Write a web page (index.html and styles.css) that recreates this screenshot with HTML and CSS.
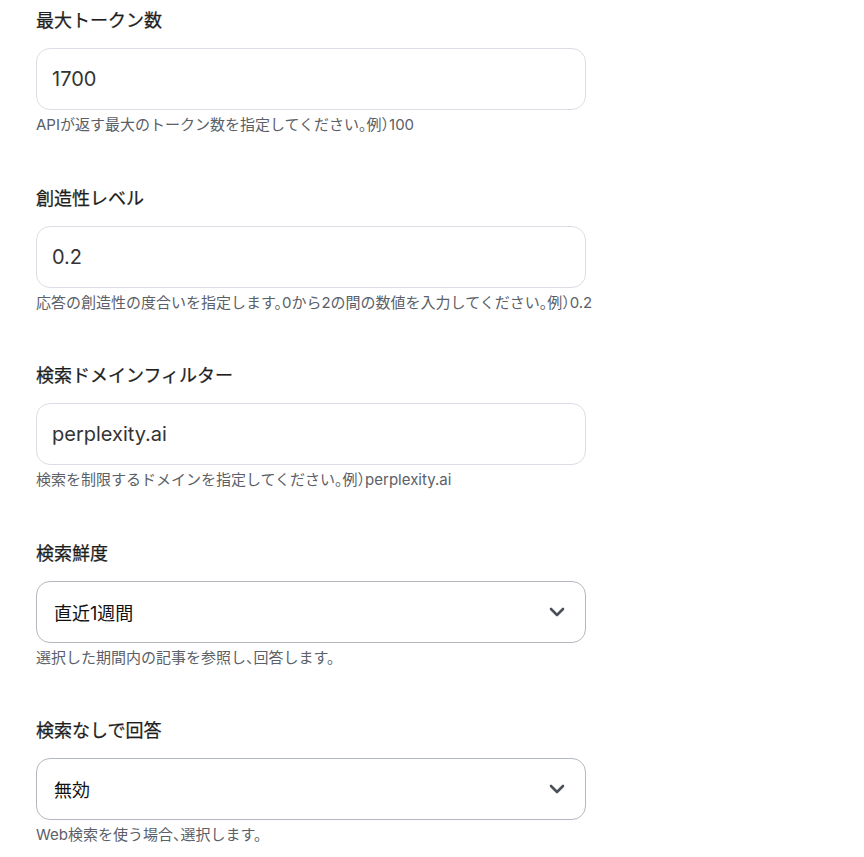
FILE: index.html
```html
<!DOCTYPE html>
<html lang="ja">
<head>
<meta charset="utf-8">
<link rel="stylesheet" href="styles.css">
</head>
<body>
<div class="form">
  <div class="field">
    <div class="label">最大トークン数</div>
    <div class="input">1700</div>
    <div class="help">APIが返す最大のトークン数を指定してください。例）100</div>
  </div>
  <div class="field">
    <div class="label">創造性レベル</div>
    <div class="input">0.2</div>
    <div class="help">応答の創造性の度合いを指定します。0から2の間の数値を入力してください。例）0.2</div>
  </div>
  <div class="field">
    <div class="label">検索ドメインフィルター</div>
    <div class="input">perplexity.ai</div>
    <div class="help">検索を制限するドメインを指定してください。例）perplexity.ai</div>
  </div>
  <div class="field">
    <div class="label">検索鮮度</div>
    <div class="select"><span>直近1週間</span>
      <svg class="chev" width="16" height="10" viewBox="0 0 16 10"><path d="M2 2l6 6 6-6" fill="none" stroke="#4b5058" stroke-width="2.6" stroke-linecap="round" stroke-linejoin="round"/></svg>
    </div>
    <div class="help">選択した期間内の記事を参照し、回答します。</div>
  </div>
  <div class="field">
    <div class="label">検索なしで回答</div>
    <div class="select"><span>無効</span>
      <svg class="chev" width="16" height="10" viewBox="0 0 16 10"><path d="M2 2l6 6 6-6" fill="none" stroke="#4b5058" stroke-width="2.6" stroke-linecap="round" stroke-linejoin="round"/></svg>
    </div>
    <div class="help">Web検索を使う場合、選択します。</div>
  </div>
</div>
</body>
</html>
```
FILE: styles.css
```css
html, body {
  margin: 0;
  padding: 0;
  background: #ffffff;
}
body {
  font-family: Inter, "Noto Sans CJK JP", sans-serif;
  color: #222;
}
.form {
  padding: 8px 0 0 36px;
  display: flex;
  flex-direction: column;
  gap: 50.5px;
}
.field {
  width: 550px;
  display: flex;
  flex-direction: column;
}
.label {
  font-size: 18px;
  font-weight: 400;
  line-height: 26px;
  color: #1e1e1e;
  margin-bottom: 14px;
  -webkit-text-stroke: 0.25px #1e1e1e;
}
.input, .select {
  box-sizing: border-box;
  height: 62px;
  border-radius: 14px;
  display: flex;
  align-items: center;
}
.input {
  border: 1px solid #dadee4;
  padding-left: 15px;
  font-size: 20px;
  color: #333;
}
.select {
  border: 1px solid #b3b8bf;
  padding: 0 20px 0 17px;
  justify-content: space-between;
  font-size: 18px;
  color: #111;
}
.chev {
  display: block;
}
.help {
  margin-top: 5px;
  font-size: 15px;
  line-height: 20px;
  color: #5b6068;
  white-space: nowrap;
  font-feature-settings: "halt";
}
```
